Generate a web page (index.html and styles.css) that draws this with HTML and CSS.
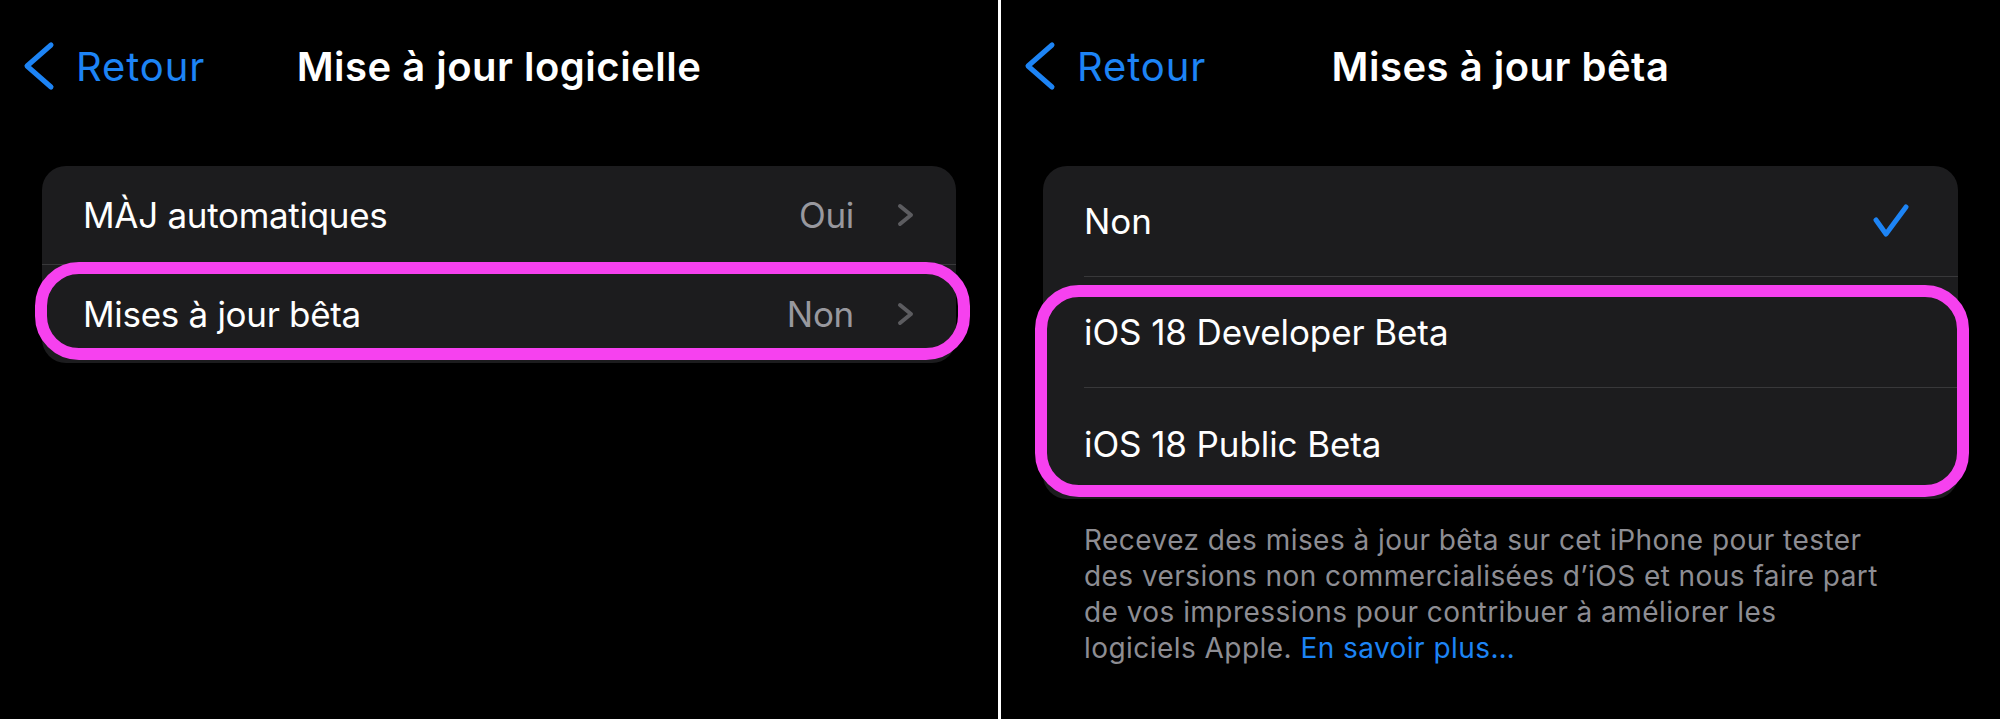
FILE: index.html
```html
<!DOCTYPE html>
<html lang="fr">

<head>
    <meta charset="UTF-8" />
    <meta name="viewport" content="width=device-width, initial-scale=1" />
    <title>Mises à jour bêta</title>
    <link rel="stylesheet" href="styles.css">
</head>

<body>
    <div class="ecran">
        <!-- Écran 1 : Mise à jour logicielle -->
        <section class="panneau">
            <header class="barre-nav">
                <a class="retour" href="#">
                    <svg class="icone-retour" viewBox="0 0 34 50"><path d="M29 4 L5 25 L29 46" /></svg>
                    Retour
                </a>
                <h1 class="titre">Mise à jour logicielle</h1>
                <span></span>
            </header>

            <div class="carte">
                <div class="ligne ligne-haute">
                    <span class="libelle">MÀJ automatiques</span>
                    <span class="valeur">Oui</span>
                    <svg class="chevron" viewBox="0 0 18 24"><path d="M3 3 L14 12 L3 21" /></svg>
                </div>
                <div class="ligne ligne-basse">
                    <span class="libelle">Mises à jour bêta</span>
                    <span class="valeur">Non</span>
                    <svg class="chevron" viewBox="0 0 18 24"><path d="M3 3 L14 12 L3 21" /></svg>
                    <span class="surlignage surlignage-gauche"></span>
                </div>
            </div>
        </section>

        <div class="separateur"></div>

        <!-- Écran 2 : Mises à jour bêta -->
        <section class="panneau">
            <header class="barre-nav">
                <a class="retour" href="#">
                    <svg class="icone-retour" viewBox="0 0 34 50"><path d="M29 4 L5 25 L29 46" /></svg>
                    Retour
                </a>
                <h1 class="titre">Mises à jour bêta</h1>
                <span></span>
            </header>

            <div class="carte">
                <div class="choix">
                    <span class="libelle">Non</span>
                    <svg class="coche" viewBox="0 0 36 34"><path d="M3 16 L13 30 L33 3" /></svg>
                </div>
                <div class="groupe-surligne">
                    <div class="choix">
                        <span class="libelle">iOS 18 Developer Beta</span>
                    </div>
                    <div class="choix">
                        <span class="libelle">iOS 18 Public Beta</span>
                    </div>
                    <span class="surlignage surlignage-droite"></span>
                </div>
            </div>

            <p class="note">
                Recevez des mises à jour bêta sur cet iPhone pour tester<br>
                des versions non commercialisées d’iOS et nous faire part<br>
                de vos impressions pour contribuer à améliorer les<br>
                logiciels Apple. <a class="lien" href="#">En savoir plus…</a>
            </p>
        </section>
    </div>
</body>

</html>
```

FILE: styles.css
```css
body {
    font-family: Inter, "Noto Sans", sans-serif;
    margin: 0;
    background-color: #000;
    color: #fff;
    width: 2000px;
    height: 719px;
    overflow: hidden;
}

.ecran {
    display: flex;
    height: 719px;
}

.panneau {
    width: 998px;
    flex: none;
}

.panneau:last-child {
    flex: 1;
    width: auto;
}

.separateur {
    width: 3px;
    background-color: #fff;
    flex: none;
}

/* barre de navigation */

.barre-nav {
    display: grid;
    grid-template-columns: 1fr auto 1fr;
    align-items: center;
    height: 132px;
    padding-left: 22px;
}

.retour {
    display: flex;
    align-items: center;
    gap: 20px;
    color: #1d84f5;
    text-decoration: none;
    font-size: 40px;
    letter-spacing: 0.9px;
}

.icone-retour {
    width: 34px;
    height: 50px;
}

.icone-retour path {
    fill: none;
    stroke: #1d84f5;
    stroke-width: 5;
    stroke-linecap: round;
    stroke-linejoin: round;
}

.titre {
    margin: 0;
    font-size: 40px;
    font-weight: 600;
    letter-spacing: 0.5px;
    margin-left: -22px;
}

/* cartes */

.carte {
    margin: 34px 42px 0 42px;
    background-color: #1c1c1e;
    border-radius: 24px;
}

.ligne {
    position: relative;
    display: flex;
    align-items: center;
    box-sizing: border-box;
    padding: 0 41px;
    font-size: 35px;
    letter-spacing: -0.3px;
}

.ligne-haute {
    height: 99px;
    border-bottom: 1px solid #38383a;
}

.ligne-basse {
    height: 98px;
}

.libelle {
    flex: 1;
}

.valeur {
    color: #98989e;
    margin-right: 43px;
}

.chevron {
    width: 18px;
    height: 24px;
}

.chevron path {
    fill: none;
    stroke: #5c5c60;
    stroke-width: 4;
    stroke-linecap: round;
    stroke-linejoin: round;
}

.choix {
    display: flex;
    align-items: center;
    box-sizing: border-box;
    height: 111px;
    margin-left: 41px;
    padding-right: 49px;
    border-bottom: 1px solid #38383a;
    font-size: 35px;
    letter-spacing: -0.1px;
}

.groupe-surligne {
    position: relative;
}

.groupe-surligne .choix:last-of-type {
    border-bottom: none;
}

.coche {
    width: 36px;
    height: 34px;
}

.coche path {
    fill: none;
    stroke: #1d84f5;
    stroke-width: 5;
    stroke-linecap: round;
    stroke-linejoin: round;
}

/* contour rose */

.surlignage {
    position: absolute;
    box-sizing: border-box;
    border: 12px solid #f641ef;
    border-radius: 44px;
    pointer-events: none;
}

.surlignage-gauche {
    top: -3px;
    bottom: 3px;
    left: -7px;
    right: -14px;
}

.surlignage-droite {
    top: 8px;
    bottom: 2px;
    left: -8px;
    right: -11px;
}

/* texte d'explication */

.note {
    margin: 23px 0 0 83px;
    font-size: 28px;
    line-height: 36px;
    color: #8d8d93;
    letter-spacing: 0.45px;
}

.lien {
    color: #1d84f5;
    text-decoration: none;
}
```
